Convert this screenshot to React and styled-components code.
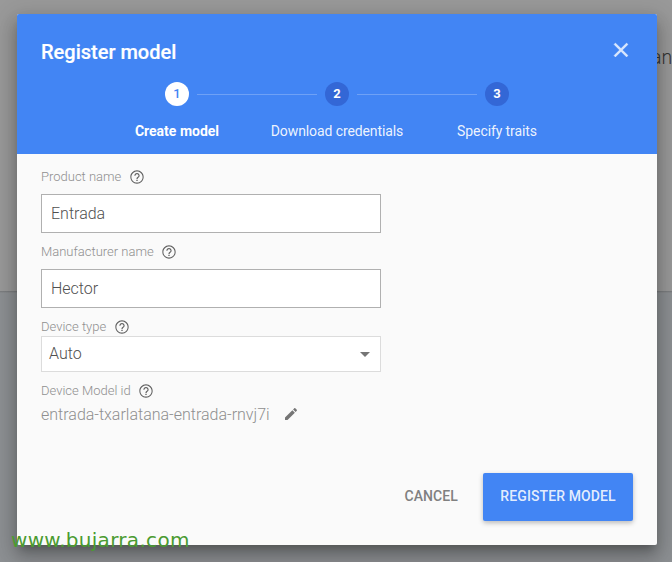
import styled, { createGlobalStyle, css } from 'styled-components';

const GlobalStyle = createGlobalStyle`
    * {
        box-sizing: border-box;
    }
    body {
        margin: 0;
        overflow: hidden;
        font-family: Roboto, sans-serif;
    }
`;

const Page = styled.div`
    position: relative;
    width: 672px;
    height: 562px;
    overflow: hidden;
    padding: 14px 15px 17px 17px;
    background: linear-gradient(#999 0, #999 291px, #76787a 291px, #8d9093 293px);
`;

const PageText = styled.span`
    position: absolute;
    left: 651px;
    top: 46px;
    font-size: 19.5px;
    line-height: 24px;
    font-weight: 300;
    color: #333;
`;

const Dialog = styled.div`
    position: relative;
    width: 640px;
    height: 531px;
    border-radius: 2px;
    background: #fafafa;
    display: flex;
    flex-direction: column;
    overflow: hidden;
`;

const DialogShadow = styled.div`
    position: relative;
    width: 640px;
    border-radius: 2px;
    box-shadow: 0 7px 8px -4px rgba(0, 0, 0, 0.22), 0 12px 17px 2px rgba(0, 0, 0, 0.16),
        0 5px 22px 4px rgba(0, 0, 0, 0.15);
`;

const Header = styled.header`
    height: 140px;
    background: #4285f4;
    color: #fff;
`;

const TitleBar = styled.div`
    display: flex;
    justify-content: space-between;
    align-items: flex-start;
    height: 68px;
    padding: 26px 24px 0;
`;

const Title = styled.h2`
    margin: 0;
    font-size: 20px;
    line-height: 24px;
    font-weight: 500;
    -webkit-text-stroke: 0.2px #fff;
`;

const CloseButton = styled.button`
    width: 24px;
    height: 24px;
    margin-top: -2px;
    padding: 0;
    border: 0;
    background: none;
    color: rgba(255, 255, 255, 0.8);
    svg {
        display: block;
    }
`;

const Steps = styled.div`
    display: flex;
    padding-left: 80px;
`;

const Step = styled.div`
    position: relative;
    width: 160px;
    display: flex;
    flex-direction: column;
    align-items: center;
    ${({ $line }) => $line && css`
        &::after {
            content: '';
            position: absolute;
            left: 100px;
            top: 12px;
            width: 120px;
            height: 1px;
            background: #6ea1f6;
        }
    `}
`;

const StepNumber = styled.span`
    width: 24px;
    height: 24px;
    border-radius: 50%;
    background: ${({ $active }) => ($active ? '#fff' : '#3367d6')};
    color: ${({ $active }) => ($active ? '#4285f4' : '#fff')};
    font-size: 13px;
    line-height: 24px;
    font-weight: ${({ $active }) => ($active ? 500 : 700)};
    text-align: center;
`;

const StepLabel = styled.span`
    margin-top: 15px;
    font-size: 14px;
    line-height: 20px;
    white-space: nowrap;
    font-weight: ${({ $active }) => ($active ? 700 : 400)};
    letter-spacing: ${({ $active }) => ($active ? 0 : '-0.1px')};
    color: ${({ $active }) => ($active ? '#fff' : 'rgba(255, 255, 255, 0.92)')};
`;

const Form = styled.div`
    flex: 1;
    padding: 14px 24px 0;
`;

const Label = styled.div`
    display: flex;
    align-items: center;
    gap: 7.5px;
    height: 18px;
    font-size: 13px;
    line-height: 18px;
    font-weight: 300;
    color: #8f8f8f;
    svg {
        flex: none;
    }
`;

const Input = styled.input`
    display: block;
    width: 340px;
    height: 39px;
    margin: 8px 0 10px;
    padding: 0 9px;
    border: 1px solid #b0b0b0;
    border-radius: 0;
    background: #fff;
    font-family: inherit;
    font-size: 16px;
    font-weight: 300;
    color: #505050;
    outline: 0;
`;

const Select = styled.div`
    display: flex;
    align-items: center;
    justify-content: space-between;
    width: 340px;
    height: 36px;
    margin-bottom: 10px;
    padding: 0 10px 0 7px;
    border: 1px solid #dcdcdc;
    background: #fff;
    font-size: 16px;
    line-height: 20px;
    font-weight: 300;
    color: #505050;
`;

const Caret = styled.span`
    border: 5px solid transparent;
    border-top-color: #757575;
    border-bottom: 0;
`;

const ModelId = styled.div`
    display: flex;
    align-items: center;
    gap: 14px;
    margin-top: 4px;
    font-size: 16px;
    line-height: 22px;
    font-weight: 300;
    color: #8f8f8f;
    svg {
        margin: -3px 0 0 -1px;
    }
`;

const Actions = styled.footer`
    display: flex;
    justify-content: flex-end;
    align-items: center;
    gap: 8px;
    padding: 0 24px 24px;
`;

const Button = styled.button`
    height: 48px;
    padding: 0 17px 2px;
    border: 0;
    border-radius: 2px;
    background: none;
    color: #808080;
    font-family: inherit;
    font-size: 14px;
    font-weight: 500;
    letter-spacing: 0.1px;
    white-space: nowrap;
    ${({ $primary }) => $primary && css`
        width: 150px;
        background: #4285f4;
        color: rgba(255, 255, 255, 0.87);
        box-shadow: 0 2px 5px rgba(0, 0, 0, 0.26);
    `}
`;

const Watermark = styled.div`
    position: absolute;
    left: 11px;
    top: 528px;
    font-family: 'DejaVu Sans', sans-serif;
    font-size: 20px;
    line-height: 24px;
    letter-spacing: 0.3px;
    color: #4a9b30;
`;

const steps = ['Create model', 'Download credentials', 'Specify traits'];

function HelpIcon() {
  return (
    <svg width="16" height="16" viewBox="0 0 24 24" fill="#616161">
      <path d="M11 18h2v-2h-2v2zm1-16C6.48 2 2 6.48 2 12s4.48 10 10 10 10-4.48 10-10S17.52 2 12 2zm0 18.4c-4.64 0-8.4-3.76-8.4-8.4s3.76-8.4 8.4-8.4 8.4 3.76 8.4 8.4-3.76 8.4-8.4 8.4zm0-14.4c-2.21 0-4 1.79-4 4h1.7c0-1.3 1-2.3 2.3-2.3s2.3 1 2.3 2.3c0 2-3.2 1.75-3.2 5h1.8c0-2.25 3.1-2.5 3.1-5 0-2.21-1.79-4-4-4z" />
    </svg>
  );
}

function App() {
  return (
    <Page>
      <GlobalStyle />
      <PageText>an</PageText>

      <DialogShadow>
        <Dialog>
          <Header>
            <TitleBar>
              <Title>Register model</Title>
              <CloseButton aria-label="Close">
                <svg width="24" height="24" viewBox="0 0 24 24" fill="currentColor" stroke="currentColor" strokeWidth="0.4">
                  <path d="M19 6.41L17.59 5 12 10.59 6.41 5 5 6.41 10.59 12 5 17.59 6.41 19 12 13.41 17.59 19 19 17.59 13.41 12z" />
                </svg>
              </CloseButton>
            </TitleBar>
            <Steps>
              {steps.map((step, i) => (
                <Step key={step} $line={i < steps.length - 1}>
                  <StepNumber $active={i === 0}>{i + 1}</StepNumber>
                  <StepLabel $active={i === 0}>{step}</StepLabel>
                </Step>
              ))}
            </Steps>
          </Header>

          <Form>
            <Label>Product name <HelpIcon /></Label>
            <Input defaultValue="Entrada" />
            <Label>Manufacturer name <HelpIcon /></Label>
            <Input defaultValue="Hector" />
            <Label>Device type <HelpIcon /></Label>
            <Select>Auto <Caret /></Select>
            <Label>Device Model id <HelpIcon /></Label>
            <ModelId>
              entrada-txarlatana-entrada-rnvj7i
              <svg width="16" height="16" viewBox="0 0 24 24" fill="#757575">
                <path d="M3 17.25V21h3.75L17.81 9.94l-3.75-3.75L3 17.25zM20.71 7.04c.39-.39.39-1.02 0-1.41l-2.34-2.34c-.39-.39-1.02-.39-1.41 0l-1.83 1.83 3.75 3.75 1.83-1.83z" />
              </svg>
            </ModelId>
          </Form>

          <Actions>
            <Button>CANCEL</Button>
            <Button $primary>REGISTER MODEL</Button>
          </Actions>
        </Dialog>
      </DialogShadow>

      <Watermark>www.bujarra.com</Watermark>
    </Page>
  );
}

export default App;
